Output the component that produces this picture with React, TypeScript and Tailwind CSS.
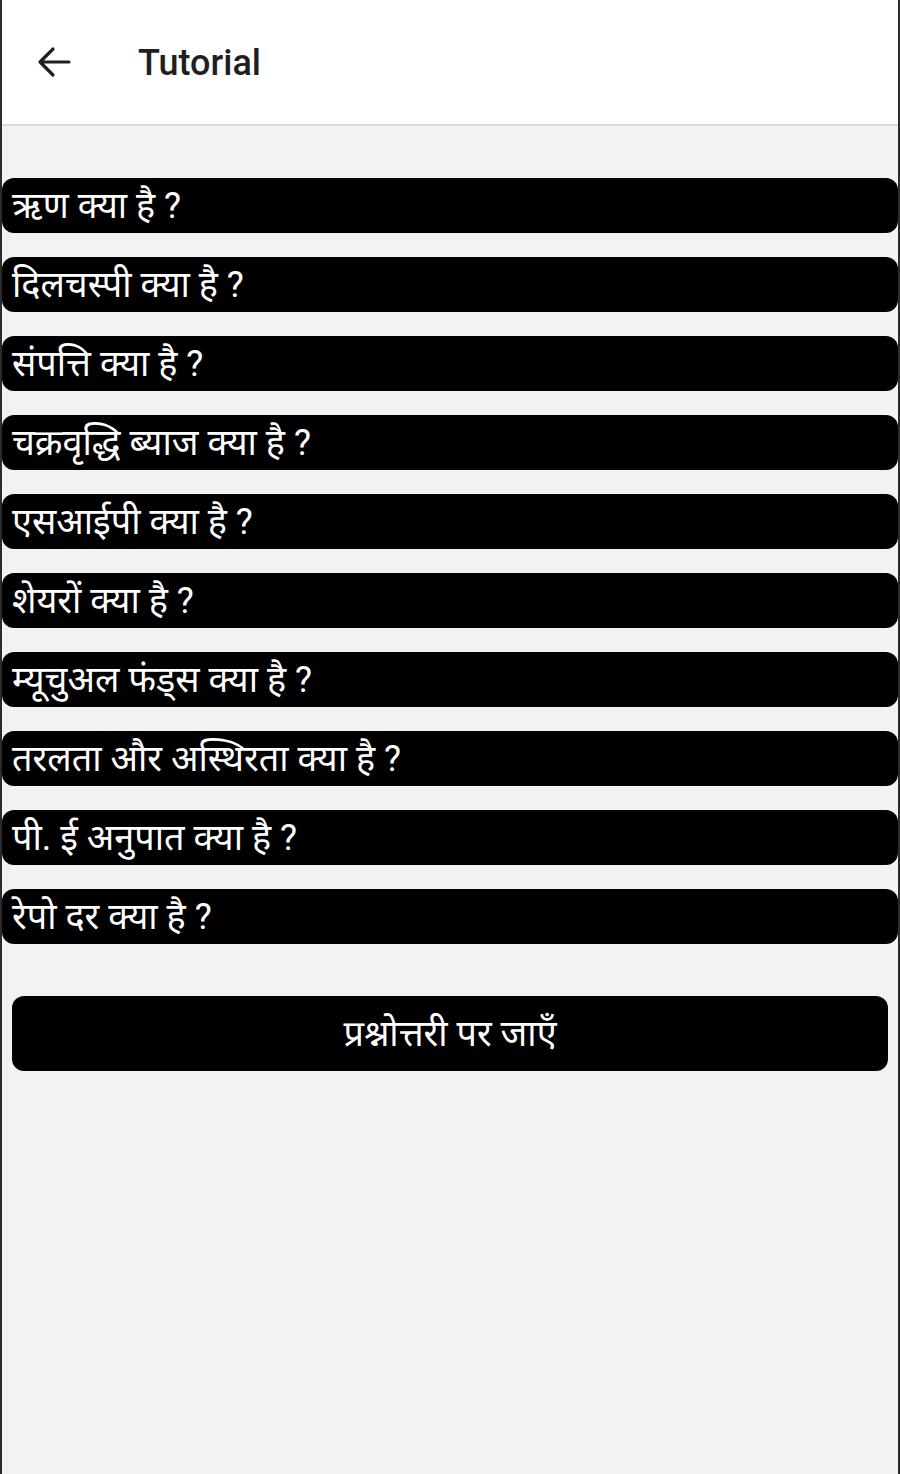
import React from "react";

const topics = [
  "ऋण क्या है ?",
  "दिलचस्पी क्या है ?",
  "संपत्ति क्या है ?",
  "चक्रवृद्धि ब्याज क्या है ?",
  "एसआईपी क्या है ?",
  "शेयरों क्या है ?",
  "म्यूचुअल फंड्स क्या है ?",
  "तरलता और अस्थिरता क्या है ?",
  "पी. ई अनुपात क्या है ?",
  "रेपो दर क्या है ?",
];

const App = () => {
  return (
    <div className="w-[900px] h-[1474px] bg-[#f2f2f2] border-x-2 border-[#2b2b2b] flex flex-col font-['Roboto','Noto_Sans',sans-serif]">
      <header className="h-[126px] bg-white border-b-2 border-[#dadada] flex items-center shrink-0">
        <button className="ml-[34px] w-[36px] h-[36px] flex items-center justify-center">
          <svg width="36" height="36" viewBox="0 0 36 36" fill="none">
            <path
              d="M33 18H4M17 5L4 18l13 13"
              stroke="#1f1f1f"
              strokeWidth="3.2"
              strokeLinecap="round"
              strokeLinejoin="round"
            />
          </svg>
        </button>
        <h1 className="ml-[66px] mt-[2px] text-[36px] font-medium text-[#1f1f1f] leading-none">
          Tutorial
        </h1>
      </header>
      <div className="flex flex-col gap-[24px] pt-[52px]">
        {topics.map((t) => (
          <div
            key={t}
            className="h-[55px] bg-black rounded-[12px] flex items-center px-[10px] text-white text-[36px] leading-none"
          >
            {t}
          </div>
        ))}
      </div>
      <div className="px-[10px] pt-[52px]">
        <button className="w-full h-[75px] bg-black rounded-[12px] text-white text-[36px] flex items-center justify-center">
          प्रश्नोत्तरी पर जाएँ
        </button>
      </div>
    </div>
  );
};

export default App;
